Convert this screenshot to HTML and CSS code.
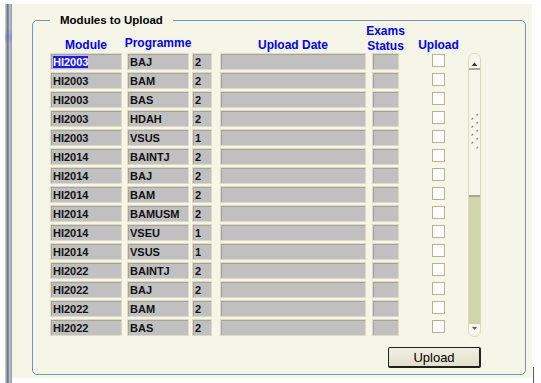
FILE: index.html
```html
<!DOCTYPE html>
<html lang="en">
  <head>
    <meta charset="UTF-8" />
    <meta name="viewport" content="width=device-width, initial-scale=1.0" />
    <title>Modules to Upload</title>
    <link rel="stylesheet" href="styles.css">
  </head>
  <body>
    <div class="screen">
      <div class="sidebar"></div>
      <div class="panel">
        <fieldset class="group">
          <legend>Modules to Upload</legend>
          <div class="groupBody">
            <div class="gridArea">
              <div class="table">
                <div class="headRow">
                  <div class="hd c-mod">Module</div>
                  <div class="hd c-prog hd-up">Programme</div>
                  <div class="hd c-num"></div>
                  <div class="hd c-date">Upload Date</div>
                  <div class="hd c-exam hd-two">Exams<br>Status</div>
                  <div class="hd c-check">Upload</div>
                </div>

                <div class="row">
                  <div class="cell c-mod"><span class="sel">HI2003</span></div>
                  <div class="cell c-prog">BAJ</div>
                  <div class="cell c-num">2</div>
                  <div class="cell c-date"></div>
                  <div class="cell c-exam"></div>
                  <div class="check c-check"></div>
                </div>
                <div class="row">
                  <div class="cell c-mod">HI2003</div>
                  <div class="cell c-prog">BAM</div>
                  <div class="cell c-num">2</div>
                  <div class="cell c-date"></div>
                  <div class="cell c-exam"></div>
                  <div class="check c-check"></div>
                </div>
                <div class="row">
                  <div class="cell c-mod">HI2003</div>
                  <div class="cell c-prog">BAS</div>
                  <div class="cell c-num">2</div>
                  <div class="cell c-date"></div>
                  <div class="cell c-exam"></div>
                  <div class="check c-check"></div>
                </div>
                <div class="row">
                  <div class="cell c-mod">HI2003</div>
                  <div class="cell c-prog">HDAH</div>
                  <div class="cell c-num">2</div>
                  <div class="cell c-date"></div>
                  <div class="cell c-exam"></div>
                  <div class="check c-check"></div>
                </div>
                <div class="row">
                  <div class="cell c-mod">HI2003</div>
                  <div class="cell c-prog">VSUS</div>
                  <div class="cell c-num">1</div>
                  <div class="cell c-date"></div>
                  <div class="cell c-exam"></div>
                  <div class="check c-check"></div>
                </div>
                <div class="row">
                  <div class="cell c-mod">HI2014</div>
                  <div class="cell c-prog">BAINTJ</div>
                  <div class="cell c-num">2</div>
                  <div class="cell c-date"></div>
                  <div class="cell c-exam"></div>
                  <div class="check c-check"></div>
                </div>
                <div class="row">
                  <div class="cell c-mod">HI2014</div>
                  <div class="cell c-prog">BAJ</div>
                  <div class="cell c-num">2</div>
                  <div class="cell c-date"></div>
                  <div class="cell c-exam"></div>
                  <div class="check c-check"></div>
                </div>
                <div class="row">
                  <div class="cell c-mod">HI2014</div>
                  <div class="cell c-prog">BAM</div>
                  <div class="cell c-num">2</div>
                  <div class="cell c-date"></div>
                  <div class="cell c-exam"></div>
                  <div class="check c-check"></div>
                </div>
                <div class="row">
                  <div class="cell c-mod">HI2014</div>
                  <div class="cell c-prog">BAMUSM</div>
                  <div class="cell c-num">2</div>
                  <div class="cell c-date"></div>
                  <div class="cell c-exam"></div>
                  <div class="check c-check"></div>
                </div>
                <div class="row">
                  <div class="cell c-mod">HI2014</div>
                  <div class="cell c-prog">VSEU</div>
                  <div class="cell c-num">1</div>
                  <div class="cell c-date"></div>
                  <div class="cell c-exam"></div>
                  <div class="check c-check"></div>
                </div>
                <div class="row">
                  <div class="cell c-mod">HI2014</div>
                  <div class="cell c-prog">VSUS</div>
                  <div class="cell c-num">1</div>
                  <div class="cell c-date"></div>
                  <div class="cell c-exam"></div>
                  <div class="check c-check"></div>
                </div>
                <div class="row">
                  <div class="cell c-mod">HI2022</div>
                  <div class="cell c-prog">BAINTJ</div>
                  <div class="cell c-num">2</div>
                  <div class="cell c-date"></div>
                  <div class="cell c-exam"></div>
                  <div class="check c-check"></div>
                </div>
                <div class="row">
                  <div class="cell c-mod">HI2022</div>
                  <div class="cell c-prog">BAJ</div>
                  <div class="cell c-num">2</div>
                  <div class="cell c-date"></div>
                  <div class="cell c-exam"></div>
                  <div class="check c-check"></div>
                </div>
                <div class="row">
                  <div class="cell c-mod">HI2022</div>
                  <div class="cell c-prog">BAM</div>
                  <div class="cell c-num">2</div>
                  <div class="cell c-date"></div>
                  <div class="cell c-exam"></div>
                  <div class="check c-check"></div>
                </div>
                <div class="row">
                  <div class="cell c-mod">HI2022</div>
                  <div class="cell c-prog">BAS</div>
                  <div class="cell c-num">2</div>
                  <div class="cell c-date"></div>
                  <div class="cell c-exam"></div>
                  <div class="check c-check"></div>
                </div>
              </div>

              <div class="scrollbar">
                <div class="sbUp">
                  <svg width="11" height="5" viewBox="0 0 11 5"><path d="M2.5 4 L5.5 0.5 L8.5 4 Z" fill="#3c3c3c"/></svg>
                </div>
                <div class="sbThumb">
                  <svg width="11" height="38" viewBox="0 0 11 38">
                    <g stroke="#8c8c78" stroke-width="1.2">
                      <path d="M7.5 2.5 L9 1"/>
                      <path d="M2.5 6.5 L4 5"/>
                      <path d="M7.5 10.5 L9 9"/>
                      <path d="M2.5 14.5 L4 13"/>
                      <path d="M7.5 18.5 L9 17"/>
                      <path d="M2.5 22.5 L4 21"/>
                      <path d="M7.5 26.5 L9 25"/>
                      <path d="M2.5 30.5 L4 29"/>
                      <path d="M7.5 35.5 L9 34"/>
                    </g>
                  </svg>
                </div>
                <div class="sbTrack"></div>
                <div class="sbDown">
                  <svg width="11" height="5" viewBox="0 0 11 5"><path d="M3 1 L8 1 L5.5 4 Z" fill="#5a5a5a"/></svg>
                </div>
              </div>
            </div>

            <div class="actions">
              <button class="uploadBtn">Upload</button>
            </div>
          </div>
        </fieldset>
      </div>
      <div class="edgeTick"></div>
    </div>
  </body>
</html>
```

FILE: styles.css
```css
body {
  margin: 0;
  background: #fff;
  font-family: "Liberation Sans", Arial, sans-serif;
  overflow: hidden;
}
.screen {
  display: flex;
  align-items: flex-start;
  height: 383px;
  padding: 4px 0 0 5px;
  box-sizing: border-box;
}
.sidebar {
  width: 7px;
  height: 379px;
  background:
    linear-gradient(to bottom, transparent 26px, rgba(90, 110, 220, 0.3) 31px, rgba(90, 110, 220, 0.3) 35px, transparent 40px),
    linear-gradient(to right, #d4d4d4 0, #c0c0c4 1px, #7c828c 2px, #66707e 3px, #a4acba 4px, #c8ccd4 5px, #9aa0a8 6px);
}
.panel {
  width: 520px;
  height: 374px;
  background: #f5f5e8;
  padding: 9px 0 0 20px;
  box-sizing: border-box;
}
.edgeTick {
  width: 1px;
  height: 16px;
  margin: 363px 0 0 1px;
  background: #555;
}

/* group box */
.group {
  margin: 0;
  padding: 0;
  width: 494px;
  height: 362px;
  box-sizing: border-box;
  border: 1px solid #7594bc;
  border-radius: 5px;
}
.group legend {
  margin-left: 17px;
  padding: 0 10px;
  font-size: 11.5px;
  font-weight: bold;
  line-height: 14px;
  color: #000;
}
.groupBody {
  padding-left: 17px;
}
.gridArea {
  display: flex;
  align-items: flex-start;
}

/* header */
.headRow {
  display: flex;
  height: 26px;
  align-items: flex-end;
}
.hd {
  display: flex;
  justify-content: center;
  font-size: 12px;
  font-weight: bold;
  line-height: 14px;
  color: #0000ff;
  white-space: nowrap;
  margin-bottom: 1px;
  text-align: center;
}
.hd-up {
  margin-bottom: 3px;
}
.hd-two {
  line-height: 15px;
  margin-bottom: -1px;
}

/* rows */
.row {
  display: flex;
  height: 17px;
  margin-bottom: 2px;
}
.cell {
  height: 17px;
  box-sizing: border-box;
  background: #c0c0c0;
  border: 1px solid #dcdcc6;
  box-shadow: inset 1px 1px 0 #a4a498;
  padding: 2px 0 0 2px;
  font-size: 11px;
  font-weight: bold;
  line-height: 13px;
  color: #111;
  overflow: hidden;
  white-space: nowrap;
}
.sel {
  background: #1a1aff;
  color: #fff;
}
.c-mod {
  width: 72px;
}
.c-prog {
  width: 62px;
  margin-left: 5px;
}
.c-num {
  width: 20px;
  margin-left: 3px;
}
.c-date {
  width: 146px;
  margin-left: 8px;
}
.c-exam {
  width: 27px;
  margin-left: 6px;
}
.c-check {
  width: 13px;
  margin-left: 33px;
}
.check {
  height: 13px;
  margin-top: 1px;
  box-sizing: border-box;
  background: #fff;
  border: 1px solid #b4b494;
}

/* scrollbar */
.scrollbar {
  display: flex;
  flex-direction: column;
  width: 13px;
  height: 284px;
  margin: 26px 0 0 23px;
  box-sizing: border-box;
  border: 1px solid #d8dcc0;
  border-radius: 6px;
  background: #f7f7ec;
  overflow: hidden;
}
.sbUp {
  height: 13px;
  display: flex;
  align-items: flex-end;
  justify-content: center;
  border-bottom: 2px solid #a8a898;
  padding-bottom: 1px;
}
.sbThumb {
  height: 127px;
  display: flex;
  justify-content: center;
  padding-top: 43px;
  box-sizing: border-box;
  border-bottom: 2px solid #a8a890;
  background: #f6f6ea;
}
.sbTrack {
  flex: 1;
  background: #d0d6ac;
}
.sbDown {
  height: 12px;
  display: flex;
  justify-content: center;
  padding-top: 2px;
  box-sizing: border-box;
}

/* button */
.actions {
  display: flex;
  justify-content: flex-end;
  width: 431px;
  margin-top: 9px;
}
.uploadBtn {
  width: 93px;
  height: 21px;
  padding: 0;
  border: 1px solid #202020;
  border-right-width: 2px;
  border-bottom-width: 2px;
  border-radius: 2px;
  background: linear-gradient(to bottom, #f0eee2, #e2dfcb);
  font-family: "Liberation Sans", Arial, sans-serif;
  font-size: 13px;
  color: #000;
}
```
